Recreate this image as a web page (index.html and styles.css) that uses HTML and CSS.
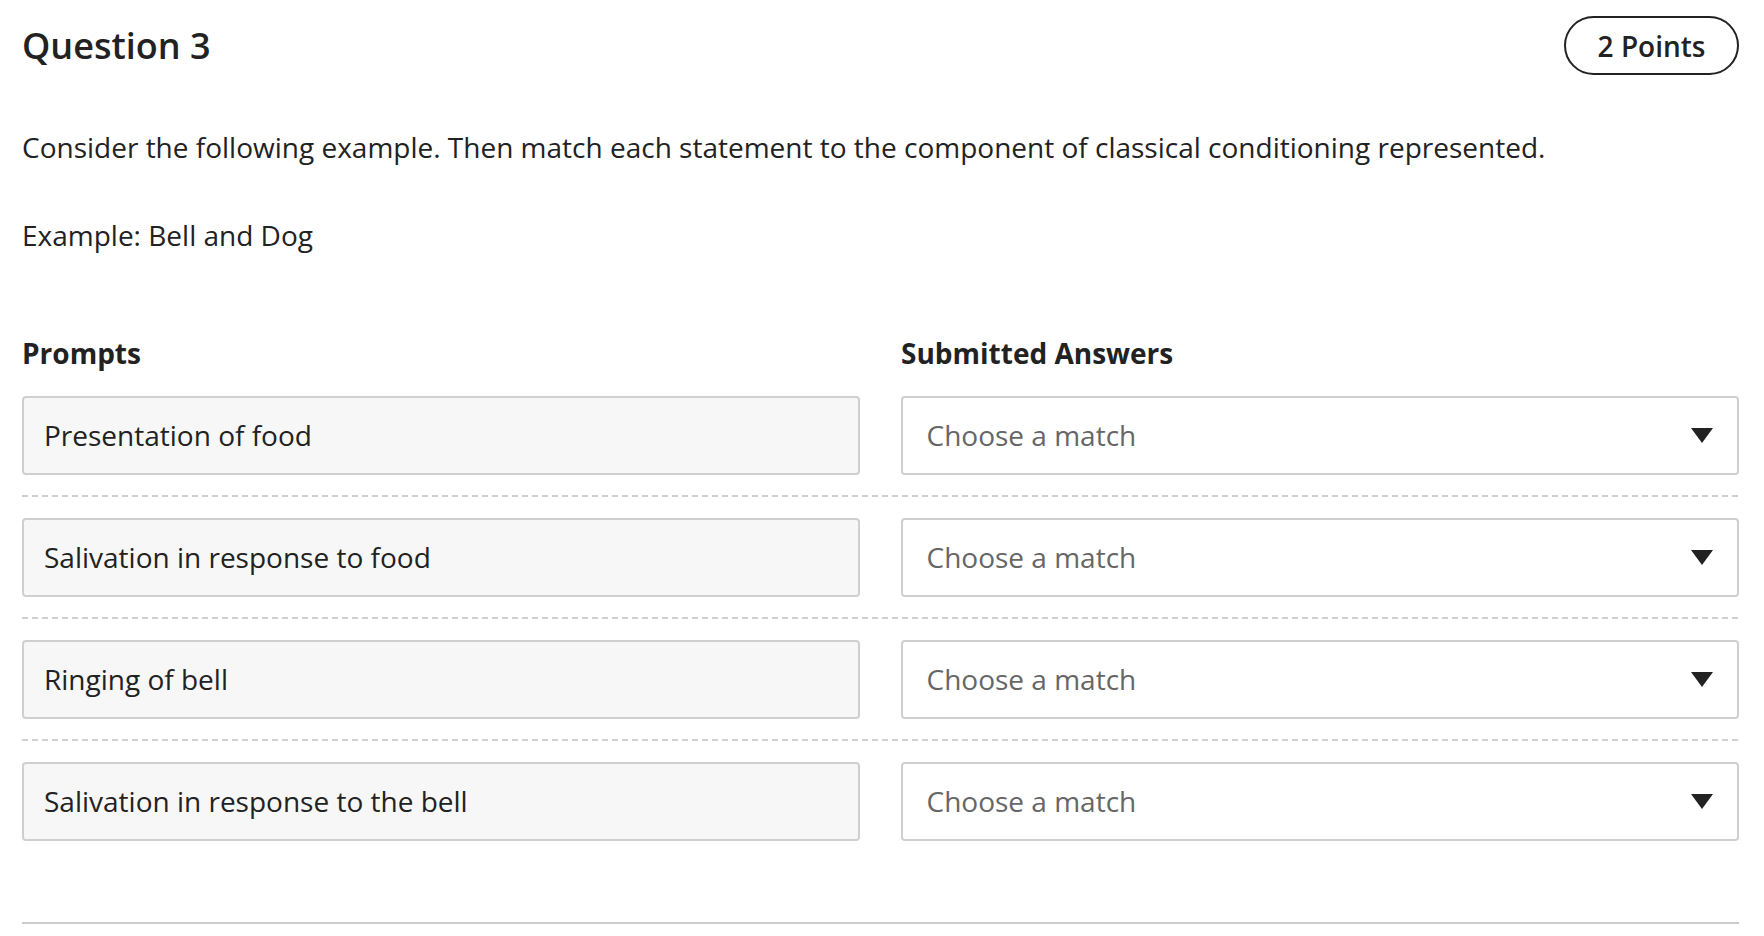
FILE: index.html
```html
<!DOCTYPE html>
<html lang="en">
<head>
    <meta charset="UTF-8">
    <meta name="viewport" content="width=device-width, initial-scale=1.0">
    <title>Question 3</title>
    <link rel="stylesheet" href="styles.css">
</head>
<body>
    <div class="question">
        <div class="question-header">
            <h1>Question 3</h1>
            <span class="points">2 Points</span>
        </div>

        <p class="prompt-text">Consider the following example. Then match each statement to the component of classical conditioning represented.</p>
        <p class="example-text">Example: Bell and Dog</p>

        <div class="match-table">
            <div class="match-head">
                <div>Prompts</div>
                <div>Submitted Answers</div>
            </div>

            <div class="match-row">
                <div class="prompt-box">Presentation of food</div>
                <div class="select-wrap">
                    <select>
                        <option>Choose a match</option>
                    </select>
                    <svg class="select-arrow" width="22" height="15" viewBox="0 0 22 15"><path d="M0 0H22L11 15Z" fill="#222"/></svg>
                </div>
            </div>
            <div class="separator"></div>

            <div class="match-row">
                <div class="prompt-box">Salivation in response to food</div>
                <div class="select-wrap">
                    <select>
                        <option>Choose a match</option>
                    </select>
                    <svg class="select-arrow" width="22" height="15" viewBox="0 0 22 15"><path d="M0 0H22L11 15Z" fill="#222"/></svg>
                </div>
            </div>
            <div class="separator"></div>

            <div class="match-row">
                <div class="prompt-box">Ringing of bell</div>
                <div class="select-wrap">
                    <select>
                        <option>Choose a match</option>
                    </select>
                    <svg class="select-arrow" width="22" height="15" viewBox="0 0 22 15"><path d="M0 0H22L11 15Z" fill="#222"/></svg>
                </div>
            </div>
            <div class="separator"></div>

            <div class="match-row">
                <div class="prompt-box">Salivation in response to the bell</div>
                <div class="select-wrap">
                    <select>
                        <option>Choose a match</option>
                    </select>
                    <svg class="select-arrow" width="22" height="15" viewBox="0 0 22 15"><path d="M0 0H22L11 15Z" fill="#222"/></svg>
                </div>
            </div>
        </div>

        <div class="question-footer"></div>
    </div>
</body>
</html>
```

FILE: styles.css
```css
* {
    margin: 0;
    padding: 0;
    box-sizing: border-box;
}

body {
    background: white;
    font-family: 'Open Sans', 'Noto Sans', sans-serif;
    color: #222;
}

.question {
    padding: 16px 25px 0 22px;
}

.question-header {
    display: flex;
    justify-content: space-between;
    align-items: center;
    height: 59px;
}

h1 {
    font-size: 36px;
    font-weight: 600;
    line-height: 49px;
    color: #222;
}

.points {
    display: flex;
    align-items: center;
    height: 59px;
    padding: 0 31.5px;
    border: 2px solid #222;
    border-radius: 30px;
    font-size: 28px;
    font-weight: 600;
}

.prompt-text,
.example-text {
    font-size: 28px;
    line-height: 40px;
}

.prompt-text {
    margin-top: 51.5px;
}

.example-text {
    margin-top: 48px;
}

.match-table {
    margin-top: 78px;
}

.match-head {
    display: grid;
    grid-template-columns: 1fr 1fr;
    column-gap: 41px;
    font-size: 28px;
    font-weight: 700;
    line-height: 40px;
    margin-bottom: 23px;
}

.match-row {
    display: grid;
    grid-template-columns: 1fr 1fr;
    column-gap: 41px;
}

.prompt-box {
    height: 79px;
    padding: 0 20px;
    display: flex;
    align-items: center;
    background: #f7f7f7;
    border: 2px solid #cfcfcf;
    border-radius: 4px;
    font-size: 28px;
}

.select-wrap {
    position: relative;
}

.select-wrap select {
    appearance: none;
    -webkit-appearance: none;
    width: 100%;
    height: 79px;
    padding: 0 60px 0 23.5px;
    background: white;
    border: 2px solid #cfcfcf;
    border-radius: 4px;
    font-family: 'Open Sans', 'Noto Sans', sans-serif;
    font-size: 28px;
    color: #666;
}

.select-arrow {
    position: absolute;
    right: 26px;
    top: 32px;
    pointer-events: none;
}

.separator {
    height: 2px;
    margin: 20.5px 0;
    background: repeating-linear-gradient(90deg, #d0d0d0 0 6px, transparent 6px 10px);
}

.question-footer {
    margin-top: 81.5px;
    border-top: 2px solid #cccccc;
}
```
